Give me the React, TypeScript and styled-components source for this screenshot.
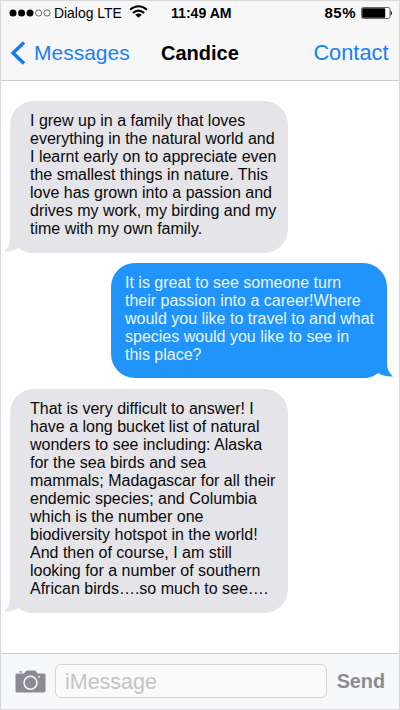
import React from "react";
import styled, { createGlobalStyle, css } from "styled-components";

const GlobalStyle = createGlobalStyle`
  * { box-sizing: border-box; }
  body { margin: 0; background: #fff; font-family: "Liberation Sans", Arial, sans-serif; }
`;

const Phone = styled.div`
  width: 400px;
  height: 710px;
  display: flex;
  flex-direction: column;
  overflow: hidden;
  background: #fff;
  border: 1px solid #d9d9db;
`;

const Header = styled.header`
  height: 80px;
  flex: none;
  background: #f7f7f7;
  border-bottom: 1px solid #cbcbcd;
`;

const StatusBar = styled.div`
  height: 24px;
  display: grid;
  grid-template-columns: 170px 1fr auto;
  align-items: center;
  padding: 0 6px 0 8px;
  line-height: 24px;
  color: #000;
  white-space: nowrap;
`;

const Carrier = styled.div`
  display: flex;
  align-items: center;
  svg { display: block; }
`;

const CarrierName = styled.span`
  margin: 0 7px 0 3px;
  font-size: 13.9px;
`;

const WifiIcon = styled.svg`
  margin-bottom: 3px;
`;

const Clock = styled.time`
  margin-left: -8px;
  font-size: 14.1px;
  font-weight: bold;
`;

const Battery = styled.div`
  display: flex;
  align-items: center;
  gap: 5px;
  font-size: 15px;
  letter-spacing: 0.5px;
  font-weight: bold;
`;

const NavBar = styled.nav`
  height: 55px;
  display: grid;
  grid-template-columns: 160px 1fr auto;
  align-items: center;
  padding: 0 10.5px 0 0;
`;

const NavLink = styled.a<{ $size: number }>`
  display: flex;
  align-items: center;
  gap: 8px;
  padding-left: 9px;
  color: #1a7ff5;
  font-size: ${(p) => p.$size}px;
  line-height: 24px;
`;

const Title = styled.h1`
  margin: 0;
  font-size: 20px;
  line-height: 24px;
  font-weight: bold;
`;

const Thread = styled.main`
  flex: 1;
  display: flex;
  flex-direction: column;
  padding: 20px 12px 0 9px;
`;

const Bubble = styled.div<{ $mine?: boolean; $bottom: number }>`
  position: relative;
  isolation: isolate;
  width: 278px;
  padding: 11px 0 ${(p) => p.$bottom}px 20px;
  border-radius: 24px;
  background: #e5e4e9;
  color: #0a0a0c;
  font-size: 16px;
  line-height: 18px;
  white-space: nowrap;
  ${(p) =>
    p.$mine &&
    css`
      align-self: flex-end;
      width: 276px;
      margin: 10px 0 11px;
      padding-left: 14px;
      background: #2094fb;
      color: #e9f6ff;
    `}
`;

const TailShape = styled.svg<{ $mine?: boolean }>`
  position: absolute;
  z-index: -1;
  bottom: 0;
  ${(p) => (p.$mine ? "right: -6px; transform: scaleX(-1);" : "left: -6px;")}
  fill: ${(p) => (p.$mine ? "#2094fb" : "#e5e4e9")};
`;

const Composer = styled.footer`
  height: 56px;
  flex: none;
  display: flex;
  align-items: center;
  padding: 0 14px;
  border-top: 1px solid #cbcbcd;
  background: #f7f8f9;
`;

const Field = styled.div`
  width: 272px;
  height: 34px;
  margin: -2px 10px 0 9px;
  padding-left: 9px;
  border: 1px solid #d5d5d8;
  border-radius: 6px;
  background: #fafafa;
  color: #c4c4c8;
  font-size: 21.5px;
  line-height: 34px;
`;

const Send = styled.button`
  padding: 0;
  margin-top: -1px;
  border: 0;
  background: none;
  color: #8c8c91;
  font: bold 19.8px/24px "Liberation Sans", Arial, sans-serif;
`;

const Tail = ({ mine }: { mine?: boolean }) => (
  <TailShape $mine={mine} width="30" height="25" viewBox="0 0 30 25">
    <path d="M6 0V11C6 16 4 20 0 23.4C6 23.8 11 22.6 15 20C19 23.6 24 25 30 25V0Z" />
  </TailShape>
);

const messages = [
  {
    mine: false,
    bottom: 15,
    lines: [
      "I grew up in a family that loves",
      "everything in the natural world and",
      "I learnt early on to appreciate even",
      "the smallest things in nature. This",
      "love has grown into a passion and",
      "drives my work, my birding and my",
      "time with my own family.",
    ],
  },
  {
    mine: true,
    bottom: 14,
    lines: [
      "It is great to see someone turn",
      "their passion into a career!Where",
      "would you like to travel to and what",
      "species would you like to see in",
      "this place?",
    ],
  },
  {
    mine: false,
    bottom: 15,
    lines: [
      "That is very difficult to answer! I",
      "have a long bucket list of natural",
      "wonders to see including: Alaska",
      "for the sea birds and sea",
      "mammals; Madagascar for all their",
      "endemic species; and Columbia",
      "which is the number one",
      "biodiversity hotspot in the world!",
      "And then of course, I am still",
      "looking for a number of southern",
      "African birds….so much to see….",
    ],
  },
];

export default function App() {
  return (
    <>
      <GlobalStyle />
      <Phone>
        <Header>
          <StatusBar>
            <Carrier>
              <svg width="42" height="8" viewBox="0 0 42 8">
                {[4, 12.6, 21].map((x) => (
                  <circle key={x} cx={x} cy="4" r="3.5" />
                ))}
                {[29.6, 38].map((x) => (
                  <circle key={x} cx={x} cy="4" r="3.1" fill="none" stroke="#444" strokeWidth="0.8" />
                ))}
              </svg>
              <CarrierName>Dialog LTE</CarrierName>
              <WifiIcon width="19" height="13" viewBox="0 0 19 13">
                <g fill="none" stroke="#000" strokeWidth="2">
                  <path d="M1 4.8Q9.5 -2.2 18 4.8" />
                  <path d="M3.8 8Q9.5 3.2 15.2 8" />
                </g>
                <path d="M6.2 9.8Q9.5 7.2 12.8 9.8L9.5 12.8Z" />
              </WifiIcon>
            </Carrier>
            <Clock>11:49 AM</Clock>
            <Battery>
              85%
              <svg width="32" height="12" viewBox="0 0 32 12">
                <rect x="0.5" y="0.5" width="28.5" height="11" rx="1.8" fill="#fff" stroke="#666" />
                <rect x="1.2" y="1.2" width="23" height="9.6" rx="0.8" />
                <path d="M29.5 3.2Q32.6 6 29.5 8.8Z" fill="#222" />
              </svg>
            </Battery>
          </StatusBar>
          <NavBar>
            <NavLink $size={21}>
              <svg width="16" height="24" viewBox="0 0 16 24">
                <path d="M14 1.5L3 12L14 22.5" fill="none" stroke="#0f7bf5" strokeWidth="3.4" />
              </svg>
              Messages
            </NavLink>
            <Title>Candice</Title>
            <NavLink $size={21.8}>Contact</NavLink>
          </NavBar>
        </Header>
        <Thread>
          {messages.map((m) => (
            <Bubble key={m.lines[0]} $mine={m.mine} $bottom={m.bottom}>
              <Tail mine={m.mine} />
              {m.lines.map((line) => (
                <div key={line}>{line}</div>
              ))}
            </Bubble>
          ))}
        </Thread>
        <Composer>
          <svg width="31" height="23" viewBox="0 0 31 23">
            <path
              fill="#8c8b92"
              d="M2 3.5H9L11 1Q11.5 0.5 12.3 0.5H19.5Q20.3 0.5 20.8 1L22.8 3.5H29Q30.6 3.5 30.6 5V21Q30.6 22.5 29 22.5H2Q0.5 22.5 0.5 21V5Q0.5 3.5 2 3.5ZM4.2 1.2H7V2.6H4.2Z"
            />
            <circle cx="15.5" cy="12.8" r="6.5" fill="none" stroke="#f7f8f9" strokeWidth="1.5" />
            <circle cx="24.2" cy="6.8" r="0.9" fill="#f7f8f9" />
          </svg>
          <Field>iMessage</Field>
          <Send>Send</Send>
        </Composer>
      </Phone>
    </>
  );
}
